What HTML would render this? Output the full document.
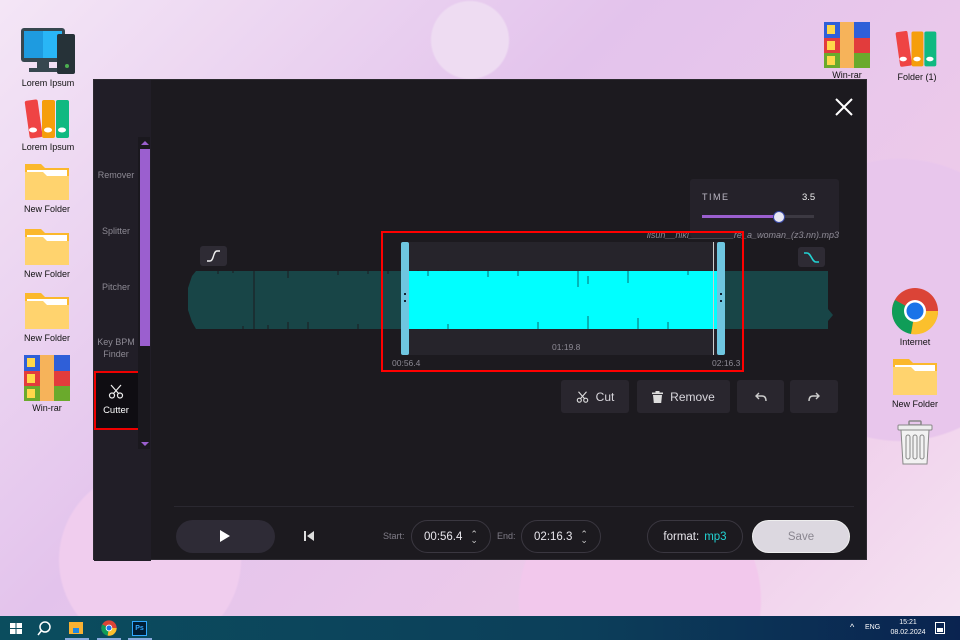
<!DOCTYPE html>
<html><head><meta charset="utf-8"><style>
*{margin:0;padding:0;box-sizing:border-box}
body{width:960px;height:640px;overflow:hidden;position:relative;font-family:"Liberation Sans",sans-serif;
background:radial-gradient(circle at 470px 40px,#eedcf2 0 38px,transparent 40px),radial-gradient(circle at 900px 300px,#e8c6ec 0 140px,transparent 142px),radial-gradient(circle at 640px 600px,#f2c8ec 0 120px,transparent 122px),radial-gradient(circle at 150px 560px,#f0cdee 0 90px,transparent 92px),linear-gradient(135deg,#f4e6f6 0%,#e3c3ec 40%,#eecbea 75%,#f6e4f2 100%)}
.ic{position:absolute;width:70px;text-align:center;font-size:9px;color:#111}
.ic svg{display:block;margin:0 auto 2px}
.win{position:absolute;left:93px;top:79px;width:774px;height:481px;background:#1c1a1f;border:1px solid #2c2a30}
.side{position:absolute;left:0;top:0;width:57px;height:481px;background:#211e27}
.sl{position:absolute;left:0;width:44px;text-align:center;font-size:9px;color:#8d8a94;line-height:12px}
.btn{position:absolute;top:300px;height:33px;background:#29262e;border-radius:3px;color:#d8d6dc;font-size:12px;display:flex;align-items:center;justify-content:center;gap:7px}
.pill{position:absolute;top:440px;height:33px;border:1px solid #3a3740;border-radius:17px;color:#e8e6ec;font-size:11.5px;display:flex;align-items:center;justify-content:center;gap:8px}
.lbl{position:absolute;top:451px;font-size:9px;color:#807d88}
.tb{position:absolute;left:0;top:616px;width:960px;height:24px;background:linear-gradient(90deg,#0b4d5e,#0c3f5a 60%,#0a2350)}
</style></head><body>

<div class="ic" style="left:13px;top:26px"><svg width="62" height="50" viewBox="0 0 62 50"><rect x="4" y="2" width="44" height="34" rx="3" fill="#37474f"/><rect x="7" y="5" width="38" height="27" fill="#29b6f6"/><rect x="7" y="5" width="19" height="27" fill="#1e9be0"/><rect x="20" y="36" width="12" height="6" fill="#37474f"/><rect x="12" y="42" width="28" height="4" fill="#37474f"/><rect x="40" y="8" width="18" height="40" rx="2" fill="#263238"/><circle cx="50" cy="40" r="2" fill="#4caf50"/></svg>Lorem Ipsum</div>
<div class="ic" style="left:13px;top:96px"><svg width="50" height="44" viewBox="0 0 50 44"><rect x="4" y="4" width="13" height="38" rx="2" fill="#ef4444" transform="rotate(-8 10 22)"/><rect x="19" y="4" width="13" height="38" rx="2" fill="#f59e0b"/><rect x="33" y="4" width="13" height="38" rx="2" fill="#10b981"/><ellipse cx="10" cy="34" rx="4" ry="2.5" fill="#fff"/><ellipse cx="25" cy="34" rx="4" ry="2.5" fill="#fff"/><ellipse cx="39" cy="34" rx="4" ry="2.5" fill="#fff"/></svg>Lorem Ipsum</div>
<div class="ic" style="left:12px;top:158px"><svg width="48" height="44" viewBox="0 0 48 44"><path d="M2 6h16l4 4h24v32H2z" fill="#fbb82c"/><rect x="4" y="12" width="40" height="6" fill="#fff"/><path d="M2 14h18l4 4h22v24H2z" fill="#ffd36e"/></svg>New Folder</div>
<div class="ic" style="left:12px;top:223px"><svg width="48" height="44" viewBox="0 0 48 44"><path d="M2 6h16l4 4h24v32H2z" fill="#fbb82c"/><rect x="4" y="12" width="40" height="6" fill="#fff"/><path d="M2 14h18l4 4h22v24H2z" fill="#ffd36e"/></svg>New Folder</div>
<div class="ic" style="left:12px;top:287px"><svg width="48" height="44" viewBox="0 0 48 44"><path d="M2 6h16l4 4h24v32H2z" fill="#fbb82c"/><rect x="4" y="12" width="40" height="6" fill="#fff"/><path d="M2 14h18l4 4h22v24H2z" fill="#ffd36e"/></svg>New Folder</div>
<div class="ic" style="left:12px;top:355px"><svg width="46" height="46" viewBox="0 0 46 46"><rect x="0" y="0" width="46" height="16" fill="#2f5fd8"/><rect x="0" y="16" width="46" height="15" fill="#e23c3c"/><rect x="0" y="31" width="46" height="15" fill="#6aaa2c"/><rect x="16" y="0" width="14" height="46" fill="#f6b35a"/><rect x="3" y="3" width="8" height="9" fill="#ffd84a"/><rect x="3" y="19" width="8" height="9" fill="#ffd84a"/><rect x="3" y="34" width="8" height="9" fill="#ffd84a"/></svg>Win-rar</div>
<div class="ic" style="left:812px;top:22px"><svg width="46" height="46" viewBox="0 0 46 46"><rect x="0" y="0" width="46" height="16" fill="#2f5fd8"/><rect x="0" y="16" width="46" height="15" fill="#e23c3c"/><rect x="0" y="31" width="46" height="15" fill="#6aaa2c"/><rect x="16" y="0" width="14" height="46" fill="#f6b35a"/><rect x="3" y="3" width="8" height="9" fill="#ffd84a"/><rect x="3" y="19" width="8" height="9" fill="#ffd84a"/><rect x="3" y="34" width="8" height="9" fill="#ffd84a"/></svg>Win-rar</div>
<div class="ic" style="left:882px;top:26px"><svg width="46" height="44" viewBox="0 0 50 44"><rect x="4" y="4" width="13" height="38" rx="2" fill="#ef4444" transform="rotate(-8 10 22)"/><rect x="19" y="4" width="13" height="38" rx="2" fill="#f59e0b"/><rect x="33" y="4" width="13" height="38" rx="2" fill="#10b981"/><ellipse cx="10" cy="34" rx="4" ry="2.5" fill="#fff"/><ellipse cx="25" cy="34" rx="4" ry="2.5" fill="#fff"/><ellipse cx="39" cy="34" rx="4" ry="2.5" fill="#fff"/></svg>Folder (1)</div>
<div class="ic" style="left:880px;top:287px"><svg width="48" height="48" viewBox="0 0 48 48"><circle cx="24" cy="24" r="23" fill="#db4437"/><path d="M24 24L4 13A23 23 0 0 0 20 47z" fill="#0f9d58"/><path d="M24 24L20 47A23 23 0 0 0 47 24z" fill="#fbc02d"/><circle cx="24" cy="24" r="11" fill="#fff"/><circle cx="24" cy="24" r="8.5" fill="#1a73e8"/></svg>Internet</div>
<div class="ic" style="left:880px;top:353px"><svg width="48" height="44" viewBox="0 0 48 44"><path d="M2 6h16l4 4h24v32H2z" fill="#fbb82c"/><rect x="4" y="12" width="40" height="6" fill="#fff"/><path d="M2 14h18l4 4h22v24H2z" fill="#ffd36e"/></svg>New Folder</div>
<div class="ic" style="left:880px;top:420px"><svg width="40" height="46" viewBox="0 0 40 46"><rect x="14" y="1" width="12" height="4" rx="1" fill="none" stroke="#888" stroke-width="1.5"/><rect x="3" y="5" width="34" height="5" rx="1" fill="#eee" stroke="#888"/><path d="M6 10h28l-2 34H8z" fill="#f2f2f2" stroke="#888"/><rect x="11" y="15" width="4" height="24" rx="2" fill="none" stroke="#888"/><rect x="18" y="15" width="4" height="24" rx="2" fill="none" stroke="#888"/><rect x="25" y="15" width="4" height="24" rx="2" fill="none" stroke="#888"/></svg></div>

<div class="win">
 <div class="side">
  <div class="sl" style="top:89px">Remover</div>
  <div class="sl" style="top:145px">Splitter</div>
  <div class="sl" style="top:201px">Pitcher</div>
  <div class="sl" style="top:256px">Key BPM<br>Finder</div>
  <div style="position:absolute;left:0;top:291px;width:48px;height:59px;background:#0f0d12;border:2px solid #e00;"></div>
  <div style="position:absolute;left:44px;top:293px;width:2px;height:55px;background:#8a7aa8"></div>
  <svg style="position:absolute;left:14px;top:304px" width="16" height="15" viewBox="0 0 16 15" fill="none" stroke="#eee" stroke-width="1.2"><circle cx="4" cy="11.5" r="2.5"/><circle cx="12" cy="11.5" r="2.5"/><path d="M5.5 9.5L13 1M10.5 9.5L3 1"/></svg>
  <div class="sl" style="top:325px;color:#fff;font-size:9.5px">Cutter</div>
  <div style="position:absolute;left:44px;top:57px;width:12px;height:312px;background:#1a181e"></div>
  <div style="position:absolute;left:46px;top:69px;width:10px;height:197px;background:#9b5fcf"></div>
  <div style="position:absolute;left:47px;top:61px;width:0;height:0;border:4px solid transparent;border-bottom:4px solid #9b5fcf;border-top:0"></div>
  <div style="position:absolute;left:47px;top:362px;width:0;height:0;border:4px solid transparent;border-top:4px solid #9b5fcf;border-bottom:0"></div>
 </div>
 <svg style="position:absolute;left:741px;top:18px" width="18" height="18" viewBox="0 0 18 18" stroke="#fff" stroke-width="2"><path d="M1 1L17 17M17 1L1 17"/></svg>
 <div style="position:absolute;left:596px;top:99px;width:149px;height:59px;background:#25222a;border-radius:3px"></div>
 <div style="position:absolute;left:608px;top:112px;font-size:9px;letter-spacing:1.5px;color:#bcb8c4">TIME</div>
 <div style="position:absolute;left:708px;top:112px;font-size:9.5px;color:#eee">3.5</div>
 <div style="position:absolute;left:608px;top:135px;width:112px;height:3px;background:#3c3942"></div>
 <div style="position:absolute;left:608px;top:135px;width:78px;height:3px;background:#9b5fcf"></div>
 <div style="position:absolute;left:679px;top:131px;width:12px;height:12px;border-radius:50%;background:#e8e8f2;border:1.5px solid #3a4aa8"></div>
 <div style="position:absolute;left:500px;top:150px;width:245px;text-align:right;font-size:9px;font-style:italic;color:#8d8a94">lisun__niki_________re_a_woman_(z3.nn).mp3</div>
 <div style="position:absolute;left:106px;top:166px;width:27px;height:20px;background:#2e2b34;border-radius:3px"></div>
 <svg style="position:absolute;left:112px;top:170px" width="15" height="12" viewBox="0 0 15 12" fill="none" stroke="#eee" stroke-width="1.4"><path d="M1 11h3C8 11 7 1 11 1h3"/></svg>
 <div style="position:absolute;left:704px;top:167px;width:27px;height:20px;background:#2e2b34;border-radius:3px"></div>
 <svg style="position:absolute;left:709px;top:171px" width="17" height="12" viewBox="0 0 17 12" fill="none" stroke="#22d3d3" stroke-width="1.6"><path d="M1 2h3c4 0 5 9 9 9h3"/></svg>
 <!-- selection overlay (behind waveform) -->
 <div style="position:absolute;left:308px;top:162px;width:321px;height:113px;background:#26242b"></div>
 <svg style="position:absolute;left:94px;top:190px" width="645" height="60" viewBox="0 0 645 60">
  <path d="M4 6L8 1h632v38l5 6-5 6v8H8L4 52 0 40V18z" fill="#184547"/>
  <g stroke="#1c1a1f" stroke-width="1"><path d="M66 0v60M100 0v8M100 52v8M30 0v4M150 0v5M200 0v4M260 0v6M290 54v6M120 52v8M45 0v3M80 55v5M170 54v6M230 0v3M240 55v5M180 0v4M55 56v4"/></g>
  <rect x="213" y="1" width="318" height="58" fill="#00ffff"/>
  <path d="M531 1l6 24-6 34z" fill="#00ffff"/>
  <g stroke="#0a6d70" stroke-width="1"><path d="M390 1v16M400 6v8M440 1v12M400 46v13M450 48v11M300 1v6M350 52v7M240 1v5M260 54v5M330 1v5M480 52v7M500 1v4"/></g>
 </svg>
 <div style="position:absolute;left:287px;top:151px;width:363px;height:141px;border:2px solid #f00"></div>
 <div style="position:absolute;left:307px;top:162px;width:8px;height:113px;background:#6ec6e0;border-radius:2px"></div>
 <div style="position:absolute;left:623px;top:162px;width:8px;height:113px;background:#6ec6e0;border-radius:2px"></div>
 <div style="position:absolute;left:619px;top:162px;width:1px;height:113px;background:#ccc"></div>
 <div style="position:absolute;left:310px;top:213px;width:2px;height:9px;border-top:2px dotted #123;border-bottom:2px dotted #123"></div>
 <div style="position:absolute;left:626px;top:213px;width:2px;height:9px;border-top:2px dotted #123;border-bottom:2px dotted #123"></div>
 <div style="position:absolute;left:458px;top:262px;font-size:8.5px;color:#8d8a94">01:19.8</div>
 <div style="position:absolute;left:298px;top:278px;font-size:8.5px;color:#8d8a94">00:56.4</div>
 <div style="position:absolute;left:618px;top:278px;font-size:8.5px;color:#8d8a94">02:16.3</div>
 <div class="btn" style="left:467px;width:68px"><svg width="13" height="12" viewBox="0 0 16 15" fill="none" stroke="#ddd" stroke-width="1.4"><circle cx="4" cy="11.5" r="2.5"/><circle cx="12" cy="11.5" r="2.5"/><path d="M5.5 9.5L13 1M10.5 9.5L3 1"/></svg>Cut</div>
 <div class="btn" style="left:543px;width:93px"><svg width="11" height="12" viewBox="0 0 11 12" fill="#ddd"><rect x="0" y="1.5" width="11" height="1.6"/><rect x="3.5" y="0" width="4" height="1.6"/><path d="M1 4h9l-.8 8H1.8z"/></svg>Remove</div>
 <div class="btn" style="left:643px;width:47px"><svg width="12" height="10" viewBox="0 0 12 10" fill="none" stroke="#ccc" stroke-width="1.4"><path d="M4 1L1 4l3 3M1 4h6c3 0 4 2 4 5"/></svg></div>
 <div class="btn" style="left:696px;width:48px"><svg width="12" height="10" viewBox="0 0 12 10" fill="none" stroke="#ccc" stroke-width="1.4"><path d="M8 1l3 3-3 3M11 4H5C2 4 1 6 1 9"/></svg></div>
 <div style="position:absolute;left:80px;top:426px;width:680px;height:1px;background:#2a2830"></div>
 <div style="position:absolute;left:82px;top:440px;width:99px;height:33px;border-radius:17px;background:#2e2b36"></div>
 <svg style="position:absolute;left:126px;top:450px" width="10" height="12" viewBox="0 0 10 12" fill="#fff"><path d="M0 0l10 6-10 6z"/></svg>
 <svg style="position:absolute;left:210px;top:451px" width="10" height="10" viewBox="0 0 10 10" fill="#ddd"><rect x="0" y="0" width="2" height="10"/><path d="M10 0v10L3 5z"/></svg>
 <div class="lbl" style="left:289px">Start:</div>
 <div class="pill" style="left:317px;width:80px">00:56.4 <span style="font-size:9px;line-height:6px;color:#ccc">⌃<br>⌄</span></div>
 <div class="lbl" style="left:403px">End:</div>
 <div class="pill" style="left:427px;width:80px">02:16.3 <span style="font-size:9px;line-height:6px;color:#ccc">⌃<br>⌄</span></div>
 <div class="pill" style="left:553px;width:96px;gap:5px">format: <span style="color:#22d3d3">mp3</span></div>
 <div class="pill" style="left:658px;width:98px;background:#dcd8e0;border-color:#eee;color:#8a8690">Save</div>
</div>

<div class="tb">
 <svg style="position:absolute;left:10px;top:7px" width="12" height="11" viewBox="0 0 12 11" fill="#fff"><rect x="0" y="0" width="5.5" height="5"/><rect x="6.5" y="0" width="5.5" height="5"/><rect x="0" y="6" width="5.5" height="5"/><rect x="6.5" y="6" width="5.5" height="5"/></svg>
 <svg style="position:absolute;left:37px;top:5px" width="14" height="15" viewBox="0 0 14 15" fill="none" stroke="#fff" stroke-width="1.5"><circle cx="8" cy="6" r="5"/><path d="M4.5 9.5L1 14"/></svg>
 <svg style="position:absolute;left:69px;top:5px" width="14" height="14" viewBox="0 0 14 14"><rect x="0" y="1" width="14" height="12" fill="#f9b233"/><rect x="4" y="7" width="6" height="5" fill="#1e88e5"/></svg>
 <svg style="position:absolute;left:101px;top:4px" width="16" height="16" viewBox="0 0 48 48"><circle cx="24" cy="24" r="23" fill="#db4437"/><path d="M24 24L4 13A23 23 0 0 0 20 47z" fill="#0f9d58"/><path d="M24 24L20 47A23 23 0 0 0 47 24z" fill="#fbc02d"/><circle cx="24" cy="24" r="10" fill="#fff"/><circle cx="24" cy="24" r="7.5" fill="#1a73e8"/></svg>
 <div style="position:absolute;left:132px;top:5px;width:15px;height:15px;background:#001e36;border:1px solid #31a8ff;color:#31a8ff;font-size:7px;font-weight:bold;text-align:center;line-height:13px">Ps</div>
 <div style="position:absolute;left:65px;top:22px;width:24px;height:2px;background:#8ad"></div>
 <div style="position:absolute;left:97px;top:22px;width:24px;height:2px;background:#8ad"></div>
 <div style="position:absolute;left:128px;top:22px;width:24px;height:2px;background:#8ad"></div>
 <div style="position:absolute;left:850px;top:6px;color:#fff;font-size:9px">^</div>
 <div style="position:absolute;left:865px;top:8px;color:#fff;font-size:7px">ENG</div>
 <div style="position:absolute;left:888px;top:2px;width:40px;text-align:center;color:#fff;font-size:7px;line-height:10px">15:21<br>08.02.2024</div>
 <svg style="position:absolute;left:935px;top:6px" width="10" height="12" viewBox="0 0 10 12"><rect x="0.5" y="0.5" width="9" height="11" fill="none" stroke="#fff"/><rect x="2" y="6" width="6" height="4" fill="#fff"/></svg>
</div>
</body></html>
